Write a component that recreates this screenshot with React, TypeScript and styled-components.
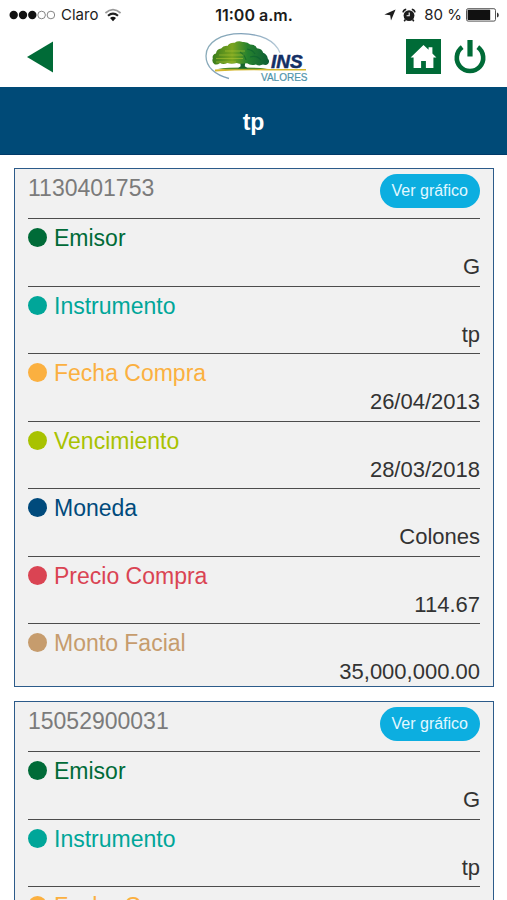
import React from "react";
import styled, { createGlobalStyle } from "styled-components";

const GlobalStyle = createGlobalStyle`
  *, *::before, *::after { box-sizing: border-box; }
  html { scrollbar-width: none; }
  body {
    margin: 0;
    background: #fff;
    font-family: "Liberation Sans", Arial, sans-serif;
  }
`;

const Screen = styled.div`
  min-height: 100vh;
`;

const StatusBar = styled.div`
  display: grid;
  grid-template-columns: 1fr auto 1fr;
  align-items: center;
  height: 30px;
  padding: 0 8px 0 9px;
  color: #1c1c1c;
  font-family: Inter, "Liberation Sans", sans-serif;
  font-size: 16px;
  line-height: 20px;
`;

const StatusGroup = styled.div<{ $end?: boolean }>`
  display: flex;
  align-items: center;
  justify-content: ${(p) => (p.$end ? "flex-end" : "flex-start")};
  gap: ${(p) => (p.$end ? 4 : 6)}px;
  white-space: nowrap;
`;

const StatusIcons = styled.span`
  display: flex;
  align-items: center;
  gap: 6px;
  margin-right: 4px;
`;

const StatusText = styled.span`
  font-size: 15px;
`;

const Clock = styled.time`
  font-size: 16px;
  font-weight: 600;
`;

const NavBar = styled.header`
  display: grid;
  grid-template-columns: 1fr auto 1fr;
  align-items: center;
  height: 57px;
  padding: 0 20px 4px 26px;
`;

const NavActions = styled.div`
  display: flex;
  align-items: center;
  justify-content: flex-end;
  gap: 12px;
`;

const IconButton = styled.button`
  display: flex;
  justify-self: start;
  padding: 0;
  border: 0;
  background: none;
  cursor: pointer;
`;

const TitleBar = styled.div`
  display: flex;
  align-items: center;
  justify-content: center;
  height: 68px;
  padding-top: 2px;
  border-bottom: 1px solid #003a68;
  background: #004a77;
`;

const Title = styled.h1`
  margin: 0;
  color: #fff;
  font-size: 23px;
  line-height: 28px;
`;

const CardList = styled.main`
  display: flex;
  flex-direction: column;
  gap: 14px;
  padding: 13px 13px 13px 14px;
`;

const Card = styled.article`
  padding: 0 13px;
  border: 1px solid #2c5b8a;
  background: #f1f1f1;
`;

const CardHeader = styled.div`
  display: flex;
  align-items: flex-start;
  justify-content: space-between;
  height: 49px;
  padding-top: 5px;
`;

const AccountNumber = styled.h2`
  margin: 0;
  color: #7b7b7b;
  font-size: 23px;
  font-weight: 400;
  line-height: 28px;
`;

const ChartButton = styled.button`
  height: 34px;
  padding: 0 12px;
  border: 0;
  border-radius: 17px;
  background: #0caee0;
  color: #e2f8ff;
  font-family: inherit;
  font-size: 16px;
  line-height: 34px;
  cursor: pointer;
`;

const Fields = styled.dl`
  margin: 0;
`;

const Field = styled.div`
  padding: 5px 0 4px;
  border-top: 1px solid #4c4c4c;

  &:nth-child(odd) {
    padding-bottom: 5px;
  }

  &:last-child {
    padding-bottom: 0;
  }
`;

const Label = styled.dt<{ $color: string }>`
  display: flex;
  align-items: center;
  gap: 7px;
  color: ${(p) => p.$color};
  font-size: 23px;
  line-height: 28px;
`;

const Dot = styled.span`
  width: 19px;
  height: 19px;
  margin-bottom: 2px;
  border-radius: 50%;
  background: currentColor;
`;

const Value = styled.dd`
  margin: 0;
  padding-top: 1px;
  color: #333;
  font-size: 22px;
  line-height: 28px;
  text-align: right;
`;

const SignalDots = () => (
  <svg width="46" height="10" viewBox="0 0 46 10" aria-hidden="true">
    {[0, 1, 2, 3, 4].map((n) => (
      <circle
        key={n}
        cx={4.7 + n * 9.3}
        cy="5"
        r={n < 3 ? 4.2 : 3.8}
        fill={n < 3 ? "#111" : "none"}
        stroke={n < 3 ? "none" : "#777"}
        strokeWidth="0.9"
      />
    ))}
  </svg>
);

const WifiIcon = () => (
  <svg width="18" height="14" viewBox="0 0 18 14" fill="none" aria-hidden="true">
    <path d="M1.4 5Q9-1.6 16.6 5" stroke="#999" strokeWidth="1.7" />
    <path d="M4 7.8Q9 3.6 14 7.8" stroke="#222" strokeWidth="2.1" />
    <path d="M6 10Q9 7.6 12 10L9 13.2Z" fill="#111" />
  </svg>
);

const LocationIcon = () => (
  <svg width="12" height="12" viewBox="0 0 12 12" aria-hidden="true">
    <path d="M11.6.6 7 11.6 6.2 6.2.4 5.4Z" fill="#1c1c1c" />
  </svg>
);

const AlarmIcon = () => (
  <svg width="14" height="14" viewBox="0 0 14 14" aria-hidden="true">
    <circle cx="7" cy="7.6" r="5.4" fill="#1c1c1c" />
    <path d="M1 4.4Q1.4 1.8 4.2 1.2M9.8 1.2Q12.6 1.8 13 4.4M3.4 11.6 2.2 13.2M10.6 11.6l1.2 1.6" stroke="#1c1c1c" strokeWidth="1.6" fill="none" />
    <path d="M7.2 4.4v3.4H4.6" stroke="#fff" strokeWidth="1.1" fill="none" />
  </svg>
);

const BatteryIcon = () => (
  <svg width="33" height="14" viewBox="0 0 33 14" aria-hidden="true">
    <rect x="0.5" y="0.7" width="29" height="12.4" rx="1.6" fill="#fff" stroke="#555" />
    <rect x="1.6" y="1.8" width="22.6" height="10.2" rx="0.6" fill="#111" />
    <path d="M31 4.4Q32.8 5 32.8 7T31 9.6Z" fill="#333" />
  </svg>
);

const BackIcon = () => (
  <svg width="28" height="32" viewBox="0 0 28 32" aria-hidden="true">
    <path d="M27 .5v31L1 16Z" fill="#006b37" />
  </svg>
);

const HomeIcon = () => (
  <svg width="35" height="35" viewBox="0 0 35 35" aria-hidden="true">
    <path d="M0 0h35v35H0Z" fill="#006b37" />
    <path d="M17.5 6 4.6 18.4h3V29h7.5v-7h4.8v7h7.5V18.4h3L26.4 14.4V8.2h-3.8v2.6Z" fill="#fff" />
  </svg>
);

const PowerIcon = () => (
  <svg width="34" height="36" viewBox="0 0 34 36" fill="none" stroke="#006b37" aria-hidden="true">
    <path d="M9.2 8.2a13.2 13.2 0 1 0 15.6 0" strokeWidth="4.6" />
    <path d="M17 1v16.5" strokeWidth="5.2" />
  </svg>
);

const Logo = () => (
  <svg width="108" height="52" viewBox="0 0 108 52" role="img" aria-label="INS Valores">
    <defs>
      <linearGradient id="crown" x1="0" x2="1">
        <stop offset="0" stopColor="#397c1c" />
        <stop offset="0.35" stopColor="#7ba51f" />
        <stop offset="0.62" stopColor="#26822e" />
        <stop offset="1" stopColor="#0d5d35" />
      </linearGradient>
      <linearGradient id="ring" x1="0" y1="0" x2="1" y2="0.3">
        <stop offset="0" stopColor="#8fb0bb" />
        <stop offset="0.5" stopColor="#7e9fb8" />
        <stop offset="1" stopColor="#b7cbd8" />
      </linearGradient>
    </defs>
    <path d="M26 47.5C12 44 3 36 3 25 3 11 18 2.7 38 2.7c20 0 34 7 39 19" fill="none" stroke="url(#ring)" strokeWidth="1.3" />
    <path d="M12 38.6q28-2.4 54-.6h37v1.5H66q-24-.9-54 1.1Z" fill="#d5b72e" />
    <path d="M15 37.4q22-2 49 0l-10 .8H23Z" fill="#4e8a28" />
    <path d="M37.2 31h5l-.4 4.2 3.2 2.4H34.8l2.8-2.4Z" fill="#17642d" />
    <path transform="translate(-1 -.5) scale(1.04)" d="M12 32.4q-3-2.4-1.6-5.4-1-3.8 3-5 .6-3.8 5-4.6 2-3 6-2.6 2.6-3.6 7-3 3.4-2.4 7.6-.8 5-.4 7.2 2.4 5-.2 6.6 3.6 5 .4 6 4.4 4.2 1.8 4.4 5.6 2.4 2.4.4 5-1.8 1.8-5 .8-3.6 1.6-6.8-.2-5 1.4-8.4-1-6 1-10-.4-5 1.6-9 0-4 2-7 0-3 2.4-5.4 1.2Z" fill="url(#crown)" />
    <path d="M22 20h20M16 24h25M13 27.5h27M13 31h20" stroke="#b4ca35" strokeWidth="0.9" opacity="0.6" />
    <path d="M44 18q6 1 8 5M47 26q7-2 11 3M37 21q5 3 6 8" stroke="#075c30" strokeWidth="1.2" fill="none" opacity="0.55" />
    <text x="68" y="37" fill="#142f65" stroke="#142f65" strokeWidth="0.5" fontFamily="Liberation Sans, Arial, sans-serif" fontSize="19" fontWeight="700" fontStyle="italic">INS</text>
    <text x="58" y="50" fill="#4f94ab" stroke="#4f94ab" strokeWidth="0.2" fontFamily="Liberation Sans Narrow, Liberation Sans, sans-serif" fontSize="10">VALORES</text>
  </svg>
);

interface Investment {
  id: string;
  issuer: string;
  instrument: string;
  purchased: string;
  due: string;
  currency: string;
  price: string;
  amount: string;
}

const investments: Investment[] = [
  {
    id: "1130401753",
    issuer: "G",
    instrument: "tp",
    purchased: "26/04/2013",
    due: "28/03/2018",
    currency: "Colones",
    price: "114.67",
    amount: "35,000,000.00",
  },
  {
    id: "15052900031",
    issuer: "G",
    instrument: "tp",
    purchased: "",
    due: "",
    currency: "",
    price: "",
    amount: "",
  },
];

const fields: { key: keyof Investment; label: string; color: string }[] = [
  { key: "issuer", label: "Emisor", color: "#006b38" },
  { key: "instrument", label: "Instrumento", color: "#00a699" },
  { key: "purchased", label: "Fecha Compra", color: "#fbb040" },
  { key: "due", label: "Vencimiento", color: "#a8c200" },
  { key: "currency", label: "Moneda", color: "#004a7c" },
  { key: "price", label: "Precio Compra", color: "#da4453" },
  { key: "amount", label: "Monto Facial", color: "#c69c6d" },
];

const InvestmentCard = ({ item }: { item: Investment }) => (
  <Card>
    <CardHeader>
      <AccountNumber>{item.id}</AccountNumber>
      <ChartButton type="button">Ver gráfico</ChartButton>
    </CardHeader>
    <Fields>
      {fields.map(({ key, label, color }) => (
        <Field key={key}>
          <Label $color={color}>
            <Dot />
            {label}
          </Label>
          <Value>{item[key] || "\u00a0"}</Value>
        </Field>
      ))}
    </Fields>
  </Card>
);

export default function App() {
  return (
    <Screen>
      <GlobalStyle />
      <StatusBar>
        <StatusGroup>
          <SignalDots />
          <StatusText>Claro</StatusText>
          <WifiIcon />
        </StatusGroup>
        <Clock>11:00 a.m.</Clock>
        <StatusGroup $end>
          <StatusIcons>
            <LocationIcon />
            <AlarmIcon />
          </StatusIcons>
          <StatusText>80 %</StatusText>
          <BatteryIcon />
        </StatusGroup>
      </StatusBar>
      <NavBar>
        <IconButton type="button" aria-label="Volver">
          <BackIcon />
        </IconButton>
        <Logo />
        <NavActions>
          <IconButton type="button" aria-label="Inicio">
            <HomeIcon />
          </IconButton>
          <IconButton type="button" aria-label="Salir">
            <PowerIcon />
          </IconButton>
        </NavActions>
      </NavBar>
      <TitleBar>
        <Title>tp</Title>
      </TitleBar>
      <CardList>
        {investments.map((item) => (
          <InvestmentCard key={item.id} item={item} />
        ))}
      </CardList>
    </Screen>
  );
}
